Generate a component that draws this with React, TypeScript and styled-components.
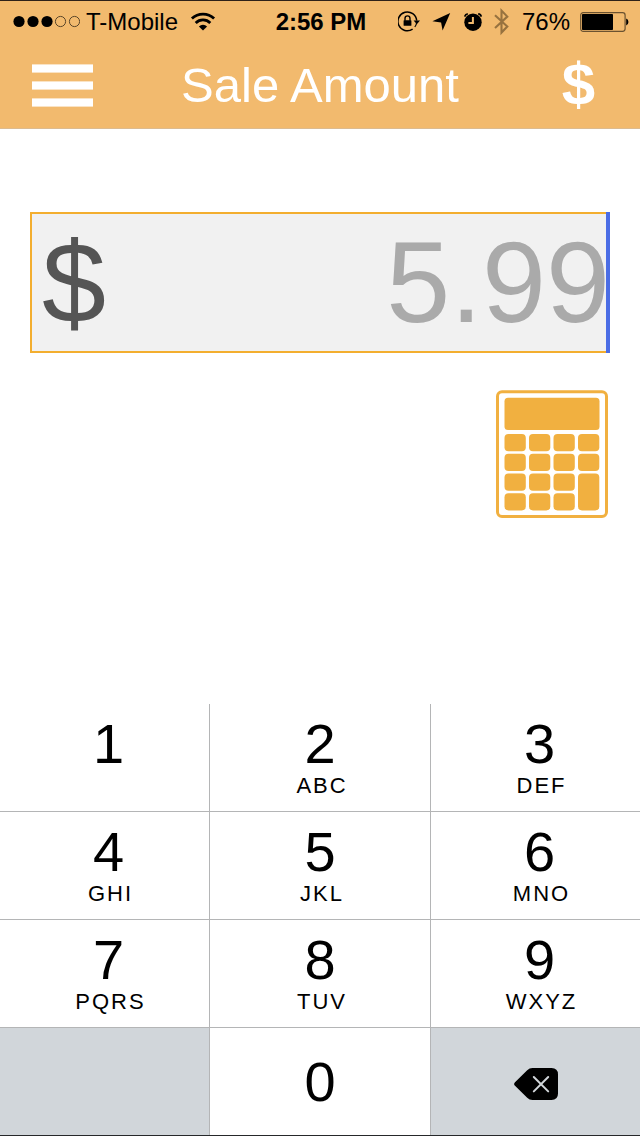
import React, { useState } from "react";
import styled, { createGlobalStyle } from "styled-components";

const GlobalStyle = createGlobalStyle`
  *, *::before, *::after { box-sizing: border-box; }
  body {
    margin: 0;
    background: #fff;
    color: #000;
    font-family: "Liberation Sans", Arial, Helvetica, sans-serif;
  }
  button, input { font: inherit; color: inherit; }
  svg { display: block; flex: none; }
`;

const Screen = styled.div`
  display: flex;
  flex-direction: column;
  min-height: 100vh;
`;

const TopArea = styled.div`
  background: #f2ba6e;
  border-top: 1px solid #2e2118;
  border-bottom: 1px solid #dcbb90;
`;

const StatusBar = styled.div`
  display: grid;
  grid-template-columns: 1fr auto 1fr;
  align-items: center;
  height: 41px;
  padding: 0 11px 0 13px;
  font-size: 24px;
  line-height: 28px;
`;

const StatusGroup = styled.div<{ $end?: boolean }>`
  display: flex;
  align-items: center;
  justify-content: ${(p) => (p.$end ? "flex-end" : "flex-start")};
  gap: ${(p) => (p.$end ? 10 : 6)}px;
`;

const Carrier = styled.span`
  margin-right: 6px;
`;

const Clock = styled.time`
  font-weight: 700;
`;

const NavBar = styled.header`
  display: grid;
  grid-template-columns: 1fr auto 1fr;
  align-items: center;
  height: 86px;
  padding: 0 32px;
  color: #fff;
`;

const NavButton = styled.button<{ $end?: boolean }>`
  display: flex;
  align-items: center;
  justify-content: ${(p) => (p.$end ? "flex-end" : "flex-start")};
  justify-self: ${(p) => (p.$end ? "end" : "start")};
  width: 61px;
  height: 64px;
  padding: 0 ${(p) => (p.$end ? 13 : 0)}px 0 0;
  border: 0;
  background: none;
  font-size: 60px;
  font-weight: 700;
  line-height: 64px;
  cursor: pointer;
`;

const MenuBars = styled.span`
  display: flex;
  flex-direction: column;
  gap: 8px;
  width: 100%;

  i {
    height: 9px;
    background: #fff;
    border: solid #fae3c4;
    border-width: 1px 0;
  }
`;

const Title = styled.h1`
  margin: 0;
  font-size: 49px;
  font-weight: 400;
  line-height: 56px;
`;

const Content = styled.main`
  display: flex;
  flex-direction: column;
  align-items: flex-end;
  gap: 37px;
  padding: 83px 30px 40px;
`;

const AmountField = styled.label`
  position: relative;
  display: flex;
  align-items: center;
  width: 100%;
  height: 141px;
  padding-left: 10px;
  border: 2px solid #f3ae2f;
  border-right: 0;
  background: #f1f1f1;
  font-size: 115px;
  line-height: 137px;
  color: #555;
`;

const AmountInput = styled.input`
  flex: 1;
  min-width: 0;
  height: 137px;
  padding: 0;
  border: 0;
  outline: 0;
  background: none;
  color: #aaa;
  text-align: right;
  line-height: 137px;
`;

const Caret = styled.span`
  position: absolute;
  top: -2px;
  right: 0;
  bottom: -2px;
  width: 4px;
  background: #4b6de5;
`;

const CalculatorButton = styled.button`
  margin-right: 2px;
  padding: 0;
  border: 0;
  background: none;
  cursor: pointer;
`;

const Keypad = styled.section`
  display: grid;
  grid-template-columns: 210fr 221fr 209fr;
  grid-template-rows: repeat(3, 108px) 107px;
  margin-top: auto;
  border-bottom: 1px solid #26282a;
`;

const Key = styled.button<{ $column: number; $last?: boolean; $shaded?: boolean }>`
  display: flex;
  flex-direction: column;
  align-items: center;
  justify-content: flex-start;
  min-width: 0;
  padding: 8px 0 0 ${(p) => (p.$column === 1 ? 0 : 8)}px;
  border: solid #b4b5b6;
  border-width: 0 ${(p) => (p.$column === 2 ? 0 : 1)}px ${(p) => (p.$last ? 0 : 1)}px 0;
  background: ${(p) => (p.$shaded ? "#d1d6da" : "#fff")};
  cursor: pointer;
`;

const Digit = styled.span<{ $alone?: boolean }>`
  font-size: 56px;
  line-height: 64px;
  ${(p) => p.$alone && "margin-top: 14px;"}
`;

const Letters = styled.span`
  padding-left: 4px;
  font-size: 22px;
  line-height: 20px;
  letter-spacing: 2px;
`;

const DeleteIconBox = styled.span`
  display: flex;
  flex: 1;
  align-items: center;
  padding: 0 8px 4px 0;
`;

const SignalIcon = () => (
  <svg width="67" height="14" viewBox="0 0 67 14" role="img" aria-label="Signal, 3 of 5">
    {[6, 20, 34].map((x) => (
      <circle key={x} cx={x} cy="6.5" r="5.6" />
    ))}
    {[47.5, 61.5].map((x) => (
      <circle key={x} cx={x} cy="6.5" r="5.1" fill="none" stroke="#5a4529" strokeWidth="1" />
    ))}
  </svg>
);

const WifiIcon = () => (
  <svg width="26" height="20" viewBox="0 0 26 20" role="img" aria-label="Wi-Fi">
    <g fill="none" stroke="#000" strokeWidth="2.8">
      <path d="M1.9 6.6A16 16 0 0 1 24.1 6.6" />
      <path d="M5.7 10.9A10.4 10.4 0 0 1 20.3 10.9" />
    </g>
    <path d="M13 18.5 8.9 14.4A6 6 0 0 1 17.1 14.4Z" />
  </svg>
);

const RotationLockIcon = () => (
  <svg width="24" height="22" viewBox="0 0 24 22" role="img" aria-label="Rotation lock">
    <path d="M14.6 18.2A9.4 9.4 0 1 1 18.7 9.6" fill="none" stroke="#000" strokeWidth="1.5" />
    <path d="M18.7 11.5A9.4 9.4 0 0 1 16.8 16" fill="none" stroke="#000" strokeWidth="1.2" />
    <path d="M15.6 9.5H22L18.8 13.2Z" />
    <rect x="5.6" y="9.2" width="7.8" height="5.6" rx=".6" />
    <path d="M7 9.8V7.4A2.5 2.5 0 0 1 12 7.4V9.8" fill="none" stroke="#000" strokeWidth="1.4" />
  </svg>
);

const LocationIcon = () => (
  <svg width="22" height="20" viewBox="0 0 22 20" role="img" aria-label="Location">
    <path d="M18.2 1 10.6 18.6 9.1 10.6.4 9.2Z" />
  </svg>
);

const AlarmIcon = () => (
  <svg width="20" height="20" viewBox="0 0 20 20" role="img" aria-label="Alarm">
    <circle cx="9" cy="10.2" r="8.7" />
    <path
      d="M.8 4.6A3.4 3.4 0 0 1 3.8 1.8M17.2 4.6A3.4 3.4 0 0 0 14.2 1.8"
      fill="none"
      stroke="#000"
      strokeWidth="1.8"
    />
    <path d="M8.9 5V11H4.4" fill="none" stroke="#f2ba6e" strokeWidth="2" />
  </svg>
);

const BluetoothIcon = () => (
  <svg width="18" height="28" viewBox="0 0 18 28" role="img" aria-label="Bluetooth">
    <path
      d="M1 7.3 13.3 18.6 7.5 24.6V2.6L13.3 8.6 1 19.9"
      fill="none"
      stroke="#97723f"
      strokeWidth="2.1"
    />
  </svg>
);

const BatteryIcon = () => (
  <svg width="49" height="20" viewBox="0 0 49 20" role="img" aria-label="Battery">
    <rect x=".7" y=".7" width="44.4" height="18.6" rx="2.5" fill="none" stroke="#6b5230" strokeWidth="1.2" />
    <rect x="2" y="2" width="31" height="16" rx=".8" />
    <path d="M46.2 6.6A3.7 3.7 0 0 1 46.2 13.4Z" />
  </svg>
);

const CalculatorIcon = () => {
  const columns = [8.5, 33, 57.5, 82];
  const rows = [44, 63.8, 83.5, 103.2];
  return (
    <svg width="112" height="128" viewBox="0 0 112 128" fill="#f1b040" aria-hidden="true">
      <rect x="1.5" y="1.7" width="109" height="124.8" rx="4.5" fill="#fff" stroke="#f1b040" strokeWidth="3" />
      <rect x="8.5" y="7.7" width="95" height="32.3" rx="3.5" />
      {rows.map((y, r) =>
        columns.map((x, c) =>
          c === 3 && r > 1 ? null : <rect key={`${x}-${y}`} x={x} y={y} width="21.3" height="17.2" rx="4" />
        )
      )}
      <rect x="82" y="83.5" width="21.3" height="36.9" rx="4" />
    </svg>
  );
};

const DeleteIcon = () => (
  <svg width="44" height="32" viewBox="0 0 44 32" aria-hidden="true">
    <path d="M1 14.2 13.2 2.2Q15.4 0 18.5 0H37.5Q44 0 44 6.5V25.5Q44 32 37.5 32H18.5Q15.4 32 13.2 29.8L1 17.8Q-.8 16 1 14.2Z" />
    <path d="M19.8 9 34.2 23.4M34.2 9 19.8 23.4" stroke="#d1d6da" strokeWidth="2" strokeLinecap="round" />
  </svg>
);

const keys = [
  ["1", ""],
  ["2", "ABC"],
  ["3", "DEF"],
  ["4", "GHI"],
  ["5", "JKL"],
  ["6", "MNO"],
  ["7", "PQRS"],
  ["8", "TUV"],
  ["9", "WXYZ"],
];

export default function App() {
  const [amount, setAmount] = useState("5.99");

  return (
    <Screen>
      <GlobalStyle />
      <TopArea>
        <StatusBar>
          <StatusGroup>
            <SignalIcon />
            <Carrier>T-Mobile</Carrier>
            <WifiIcon />
          </StatusGroup>
          <Clock>2:56 PM</Clock>
          <StatusGroup $end>
            <RotationLockIcon />
            <LocationIcon />
            <AlarmIcon />
            <BluetoothIcon />
            <span>76%</span>
            <BatteryIcon />
          </StatusGroup>
        </StatusBar>
        <NavBar>
          <NavButton type="button" aria-label="Menu">
            <MenuBars>
              <i />
              <i />
              <i />
            </MenuBars>
          </NavButton>
          <Title>Sale Amount</Title>
          <NavButton type="button" $end>
            $
          </NavButton>
        </NavBar>
      </TopArea>

      <Content>
        <AmountField>
          <span>$</span>
          <AmountInput
            aria-label="Sale amount"
            inputMode="decimal"
            value={amount}
            onChange={(e) => setAmount(e.target.value)}
          />
          <Caret />
        </AmountField>
        <CalculatorButton type="button" aria-label="Calculator">
          <CalculatorIcon />
        </CalculatorButton>
      </Content>

      <Keypad aria-label="Keypad">
        {keys.map(([digit, letters], i) => (
          <Key
            key={digit}
            type="button"
            $column={i % 3}
            onClick={() => setAmount((a) => a + digit)}
          >
            <Digit>{digit}</Digit>
            {letters && <Letters>{letters}</Letters>}
          </Key>
        ))}
        <Key as="div" $column={0} $last $shaded />
        <Key type="button" $column={1} $last onClick={() => setAmount((a) => a + "0")}>
          <Digit $alone>0</Digit>
        </Key>
        <Key
          type="button"
          aria-label="Delete"
          $column={2}
          $last
          $shaded
          onClick={() => setAmount((a) => a.slice(0, -1))}
        >
          <DeleteIconBox>
            <DeleteIcon />
          </DeleteIconBox>
        </Key>
      </Keypad>
    </Screen>
  );
}
